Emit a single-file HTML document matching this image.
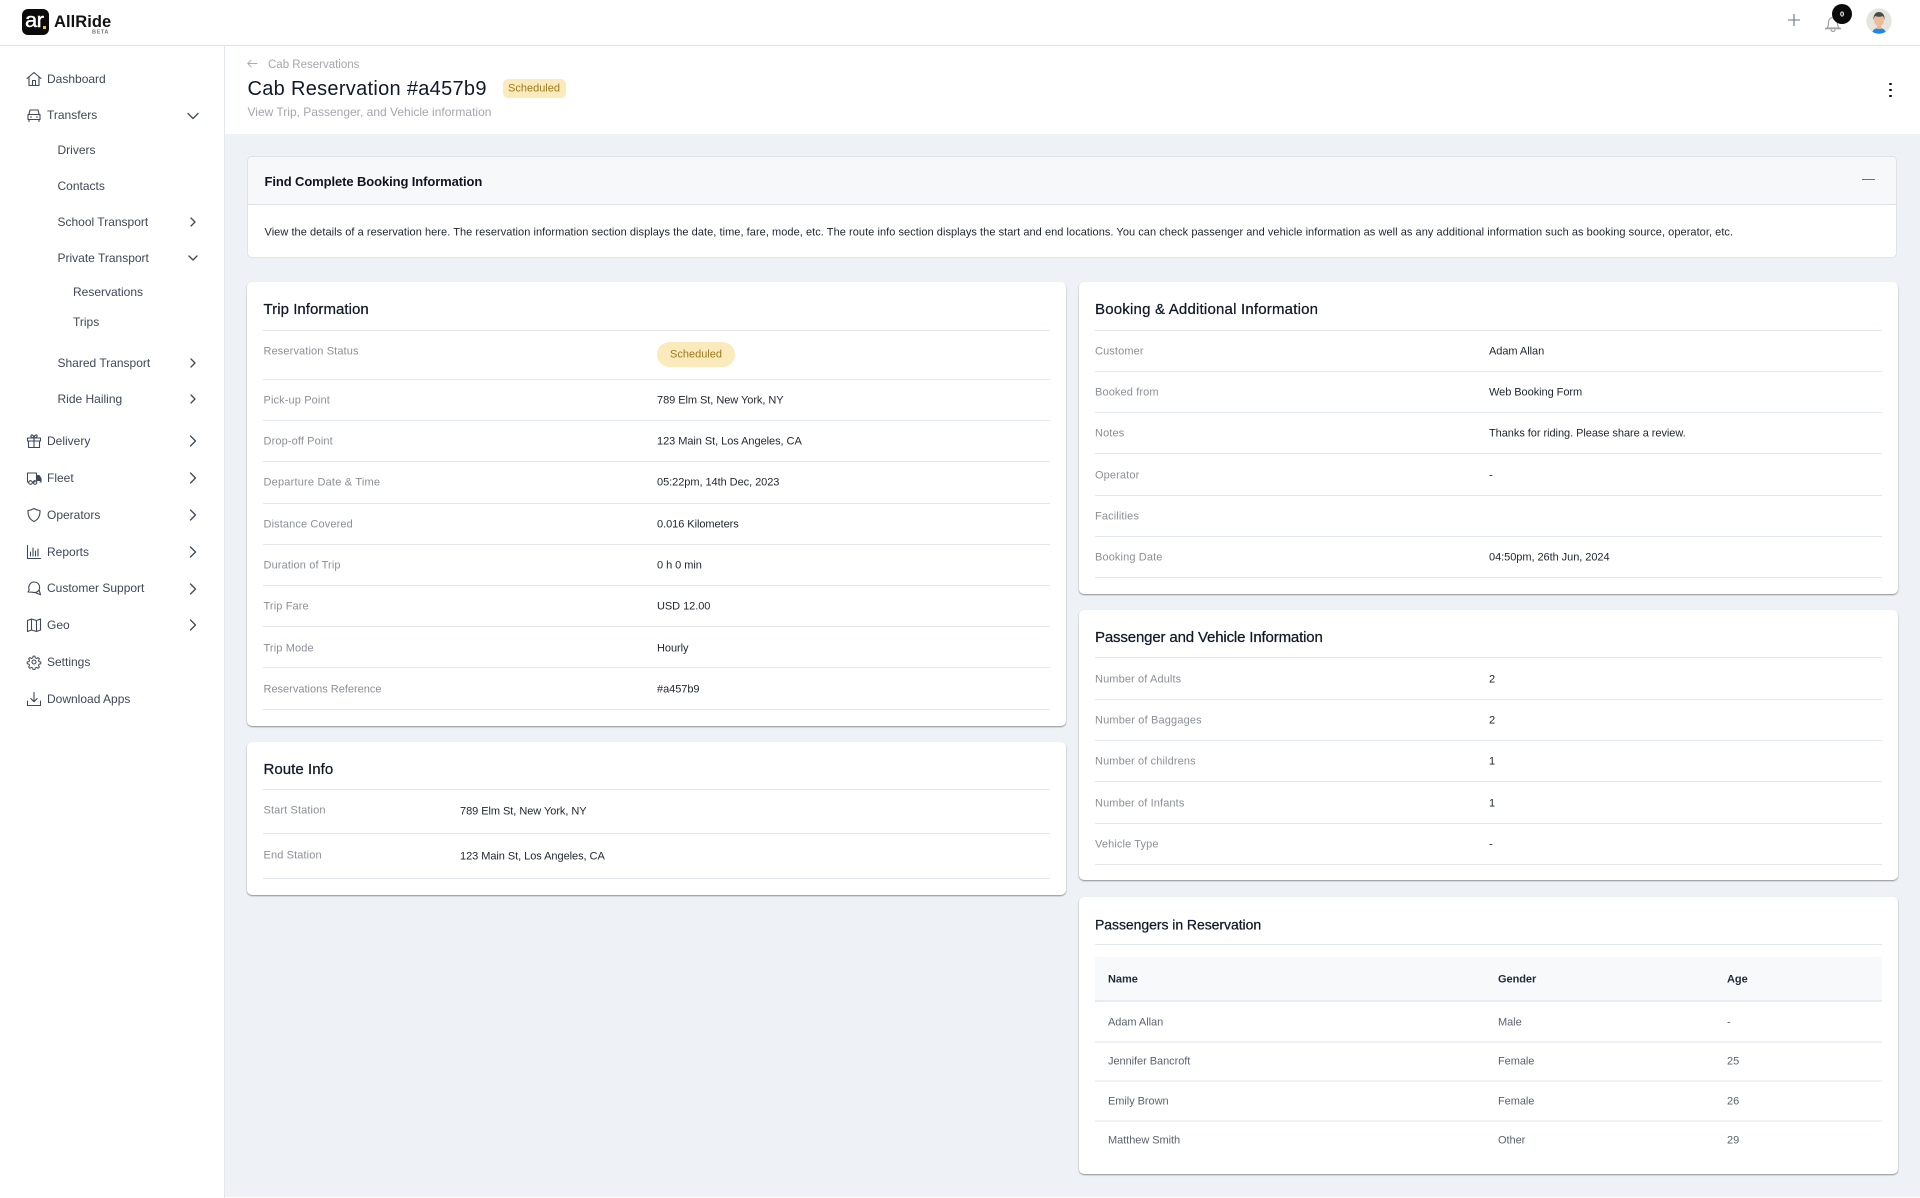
<!DOCTYPE html>
<html lang="en"><head><meta charset="utf-8"><title>Cab Reservation</title>
<style>
*{box-sizing:border-box}
html,body{margin:0;padding:0;width:1920px;height:1198px;overflow:hidden;background:#eef1f6;font-family:"Liberation Sans",sans-serif}
.a{position:absolute}
.t{position:absolute;transform:translateY(-50%);white-space:nowrap;line-height:1.2}
.s{font-size:12px;color:#3f4757;letter-spacing:0}
.i{position:absolute;left:26px;width:16px;height:16px;fill:none;stroke:#3f4757;stroke-width:1.1;stroke-linecap:round;stroke-linejoin:round}
.c{position:absolute;width:12px;height:12px;fill:none;stroke:#3f4757;stroke-width:1.3;stroke-linecap:round;stroke-linejoin:round}
.card{position:absolute;background:#fff;border-radius:5px;box-shadow:0 1px 1.5px rgba(60,60,60,.55)}
.h{font-size:15px;color:#111827;letter-spacing:.05px;-webkit-text-stroke:.25px #111827;margin-top:1px}
.l{font-size:11px;color:#8b8f97;letter-spacing:.12px;margin-top:1px}
.v{font-size:11px;color:#1f2430;letter-spacing:-.05px;margin-top:1px}
.d{position:absolute;height:1px;background:#e3e8ef}
.g{font-size:11px;color:#5b6270;letter-spacing:-.05px;margin-top:1px}
.b{font-size:11px;color:#1f2937;font-weight:bold;letter-spacing:-.05px;margin-top:1px}
</style></head><body>

<!-- top bar -->
<div class="a" style="left:0;top:0;width:1920px;height:46px;background:#fff;border-bottom:1px solid #dfe3e8"></div>
<div class="a" style="left:22px;top:9px;width:27px;height:26px;background:#0b0b0b;border-radius:6px"></div>
<span class="t" style="left:25px;top:21px;font-size:20px;color:#fff;letter-spacing:-.5px;-webkit-text-stroke:.4px #fff;transform:translateY(-50%) scaleX(1.1);transform-origin:left center">ar</span>
<div class="a" style="left:43px;top:26px;width:3px;height:3px;background:#f4c430"></div>
<span class="t" style="left:54px;top:23px;font-size:16.500px;font-weight:bold;color:#111;letter-spacing:.05px">AllRide</span>
<span class="t" style="left:92px;top:33px;font-size:5.500px;font-weight:bold;color:#777;letter-spacing:.6px">BETA</span>

<svg class="a" style="left:1787px;top:13px;width:14px;height:14px" viewBox="0 0 14 14" fill="none" stroke="#64748b" stroke-width="1.1"><path d="M7 1v12M1 7h12"/></svg>
<svg class="a" style="left:1823px;top:12px;width:20px;height:20px" viewBox="0 0 20 20" fill="none" stroke="#a3a3a3" stroke-width="1.2"><path d="M4 16c1.500-2 1.500-3 1.500-6a4.500 4.500 0 0 1 9 0c0 3 0 4 1.500 6z"/><path d="M2 16.500h16" stroke-width="1.600"/><path d="M8 17.500a2 2 0 0 0 4 0"/></svg>
<div class="a" style="left:1832px;top:4px;width:20px;height:20px;border-radius:50%;background:#0b0b0b"></div>
<span class="t" style="left:1840px;top:14px;font-size:7.500px;font-weight:bold;color:#fff">0</span>
<svg class="a" style="left:1866px;top:8px;width:26px;height:26px" viewBox="0 0 26 26"><defs><clipPath id="av"><circle cx="13" cy="13" r="12.700"/></clipPath></defs><circle cx="13" cy="13" r="12.700" fill="#e4e4e0"/><g clip-path="url(#av)"><path d="M6 26c0-4 3-6 7-6s7 2 7 6z" fill="#1e88e5"/><rect x="11" y="16" width="4" height="5" fill="#e8b48e"/><ellipse cx="13" cy="12" rx="5" ry="6.300" fill="#edbb96"/><path d="M7.500 12c-.5-5 2-8 5.500-8s6 3 5.500 8c-.5-2-1-3.500-2-4-2 1-5 1-7 0-1 .5-1.500 2-2 4z" fill="#4a4a4a"/></g></svg>

<!-- sidebar -->
<div class="a" style="left:0;top:46px;width:225px;height:1152px;background:#fff;border-right:1px solid #e4e8ee"></div>
<span class="t s" style="left:47px;top:79px">Dashboard</span>
<span class="t s" style="left:47px;top:115px">Transfers</span>
<span class="t s" style="left:57.500px;top:150px">Drivers</span>
<span class="t s" style="left:57.500px;top:186px">Contacts</span>
<span class="t s" style="left:57.500px;top:222px">School Transport</span>
<span class="t s" style="left:57.500px;top:258px">Private Transport</span>
<span class="t s" style="left:73px;top:292px">Reservations</span>
<span class="t s" style="left:73px;top:322px">Trips</span>
<span class="t s" style="left:57.500px;top:363px">Shared Transport</span>
<span class="t s" style="left:57.500px;top:399px">Ride Hailing</span>
<span class="t s" style="left:47px;top:441px">Delivery</span>
<span class="t s" style="left:47px;top:478px">Fleet</span>
<span class="t s" style="left:47px;top:515px">Operators</span>
<span class="t s" style="left:47px;top:552px">Reports</span>
<span class="t s" style="left:47px;top:588px">Customer Support</span>
<span class="t s" style="left:47px;top:625px">Geo</span>
<span class="t s" style="left:47px;top:662px">Settings</span>
<span class="t s" style="left:47px;top:699px">Download Apps</span>

<svg class="i" style="top:71px" viewBox="0 0 16 16"><path d="M1 7.500 8 1.500l7 6M3 6v8.500h10V6M6.500 14.500V9.500h3v5"/></svg>
<svg class="i" style="top:107px" viewBox="0 0 16 16"><path d="M3 7l1-4h8l1 4M2 7.500h12v5H2zM3 12.500v2M13 12.500v2M4.500 10h1M10.500 10h1"/></svg>
<svg class="i" style="top:433px" viewBox="0 0 16 16"><path d="M1.500 5h13v3h-13zM2.500 8v6.500h11V8M8 5v9.500M8 5C6 5 4.500 4 5 2.500S8 2.500 8 5c0-2.500 2.500-4 3-2.500S10 5 8 5z"/></svg>
<svg class="i" style="top:470px" viewBox="0 0 16 16"><path d="M2.500 12H1.500V3h9v7M10.500 5.500h2.500l2 3V12h-1M7 12h2"/><circle cx="4.500" cy="12.500" r="1.800"/><circle cx="9" cy="12.500" r="1.800"/><path d="M11 6h2.500l1 2.500v2h-3.500z" fill="#3f4757"/></svg>
<svg class="i" style="top:507px" viewBox="0 0 16 16"><path d="M8 1.500c2 1.300 4 1.800 6 2 .2 5-1.500 9-6 11-4.500-2-6.200-6-6-11 2-.2 4-.7 6-2z"/></svg>
<svg class="i" style="top:544px" viewBox="0 0 16 16"><path d="M1.500 1.500v13h13M4.500 12V8M7 12V4M9.500 12V7M12 12V5"/></svg>
<svg class="i" style="top:580px" viewBox="0 0 16 16"><path d="M2 12 3.200 10C1.800 6.500 4 2 8 2s6 3 5.500 6.500c-.5 3-4 4.800-7 3.700zM9 12.500l5.500 2.200-1.300-4.500"/></svg>
<svg class="i" style="top:617px" viewBox="0 0 16 16"><path d="M1.500 3.500 5.500 2l5 1.500 4-1.500v11l-4 1.500-5-1.500-4 1.500zM5.500 2v11M10.500 3.500v11"/></svg>
<svg class="i" style="top:654px" viewBox="0 0 16 16"><circle cx="8" cy="8" r="2"/><path d="M7 1.500h2l.4 1.900 1.500.7 1.700-1 1.400 1.400-1 1.700.6 1.400 2 .4v2l-2 .4-.6 1.500 1 1.700-1.400 1.400-1.700-1-1.500.6-.4 2H7l-.4-2-1.500-.6-1.700 1-1.400-1.400 1-1.700-.6-1.500-2-.4v-2l2-.4.6-1.400-1-1.700 1.400-1.400 1.700 1 1.500-.7z" transform="translate(.8 .8) scale(.9)"/></svg>
<svg class="i" style="top:691px" viewBox="0 0 16 16"><path d="M8 1.500v9M4.800 7.500 8 10.700l3.200-3.200M1.500 10v4.500h13V10"/></svg>

<svg class="c" style="left:185.500px;top:110px;width:14px;height:12px" viewBox="0 0 14 12"><path d="M2 3.500l5 5 5-5"/></svg>
<svg class="c" style="left:186.500px;top:216px" viewBox="0 0 12 12"><path d="M4 2l4 4-4 4"/></svg>
<svg class="c" style="left:186.500px;top:252px" viewBox="0 0 12 12"><path d="M2 4l4 4 4-4"/></svg>
<svg class="c" style="left:186.500px;top:357px" viewBox="0 0 12 12"><path d="M4 2l4 4-4 4"/></svg>
<svg class="c" style="left:186.500px;top:393px" viewBox="0 0 12 12"><path d="M4 2l4 4-4 4"/></svg>
<svg class="c" style="left:186.500px;top:434px;height:14px" viewBox="0 0 12 14"><path d="M3.500 2l5 5-5 5"/></svg>
<svg class="c" style="left:186.500px;top:471px;height:14px" viewBox="0 0 12 14"><path d="M3.500 2l5 5-5 5"/></svg>
<svg class="c" style="left:186.500px;top:508px;height:14px" viewBox="0 0 12 14"><path d="M3.500 2l5 5-5 5"/></svg>
<svg class="c" style="left:186.500px;top:545px;height:14px" viewBox="0 0 12 14"><path d="M3.500 2l5 5-5 5"/></svg>
<svg class="c" style="left:186.500px;top:582px;height:14px" viewBox="0 0 12 14"><path d="M3.500 2l5 5-5 5"/></svg>
<svg class="c" style="left:186.500px;top:618px;height:14px" viewBox="0 0 12 14"><path d="M3.500 2l5 5-5 5"/></svg>

<!-- page header -->
<div class="a" style="left:225px;top:46px;width:1695px;height:88px;background:#fff"></div>
<svg class="a" style="left:247px;top:58px;width:11px;height:11px" viewBox="0 0 11 11" fill="none" stroke="#a8adb5" stroke-width="1"><path d="M10.500 5.500H.8M4.500 1.800.8 5.500l3.700 3.700"/></svg>
<span class="t" style="left:268px;top:65.500px;font-size:11.500px;color:#a3a7ae">Cab Reservations</span>
<span class="t" style="left:247.500px;top:89px;font-size:20px;color:#111827;letter-spacing:.3px">Cab Reservation #a457b9</span>
<div class="a" style="left:503px;top:79px;width:63px;height:19px;background:#fbeabb;border-radius:5px"></div>
<span class="t" style="left:508px;top:89px;font-size:11px;color:#9a7a1e">Scheduled</span>
<span class="t" style="left:247.500px;top:112px;font-size:12px;color:#a3a7ae;letter-spacing:0">View Trip, Passenger, and Vehicle information</span>
<div class="a" style="left:1889px;top:82.500px;width:2.500px;height:2.500px;border-radius:50%;background:#111;box-shadow:0 6px 0 #111,0 12px 0 #111"></div>

<!-- info card -->
<div class="a" style="left:247px;top:156px;width:1650px;height:102px;background:#fff;border:1px solid #dfe3ea;border-radius:5px;overflow:hidden">
  <div class="a" style="left:0;top:0;width:100%;height:48px;background:#f7f8fa;border-bottom:1px solid #dfe3ea"></div>
</div>
<span class="t" style="left:264.500px;top:182px;font-size:13px;font-weight:bold;color:#0f1420;letter-spacing:-.1px">Find Complete Booking Information</span>
<div class="a" style="left:1862px;top:179px;width:13px;height:1px;background:#6b7280"></div>
<span class="t" style="left:264.500px;top:233px;font-size:11px;color:#1f2430;letter-spacing:.05px">View the details of a reservation here. The reservation information section displays the date, time, fare, mode, etc. The route info section displays the start and end locations. You can check passenger and vehicle information as well as any additional information such as booking source, operator, etc.</span>

<!-- Trip card -->
<div class="card" style="left:247px;top:282px;width:819px;height:444px"></div>
<span class="t h" style="left:263.500px;top:309px">Trip Information</span>
<div class="d" style="left:263px;top:330px;width:787px"></div>
<div class="d" style="left:263px;top:379px;width:787px"></div>
<div class="d" style="left:263px;top:420px;width:787px"></div>
<div class="d" style="left:263px;top:461px;width:787px"></div>
<div class="d" style="left:263px;top:503px;width:787px"></div>
<div class="d" style="left:263px;top:544px;width:787px"></div>
<div class="d" style="left:263px;top:585px;width:787px"></div>
<div class="d" style="left:263px;top:626px;width:787px"></div>
<div class="d" style="left:263px;top:667px;width:787px"></div>
<div class="d" style="left:263px;top:709px;width:787px"></div>
<span class="t l" style="left:263.500px;top:351px">Reservation Status</span>
<div class="a" style="left:657px;top:342px;width:78px;height:25px;background:#fbeabb;border-radius:13px"></div>
<span class="t" style="left:670px;top:355px;font-size:11px;color:#9a7a1e">Scheduled</span>
<span class="t l" style="left:263.500px;top:400px">Pick-up Point</span><span class="t v" style="left:657px;top:400px">789 Elm St, New York, NY</span>
<span class="t l" style="left:263.500px;top:441px">Drop-off Point</span><span class="t v" style="left:657px;top:441px">123 Main St, Los Angeles, CA</span>
<span class="t l" style="left:263.500px;top:482px;letter-spacing:.2px">Departure Date &amp; Time</span><span class="t v" style="left:657px;top:482px">05:22pm, 14th Dec, 2023</span>
<span class="t l" style="left:263.500px;top:524px">Distance Covered</span><span class="t v" style="left:657px;top:524px">0.016 Kilometers</span>
<span class="t l" style="left:263.500px;top:565px">Duration of Trip</span><span class="t v" style="left:657px;top:565px">0 h 0 min</span>
<span class="t l" style="left:263.500px;top:606px">Trip Fare</span><span class="t v" style="left:657px;top:606px">USD 12.00</span>
<span class="t l" style="left:263.500px;top:648px">Trip Mode</span><span class="t v" style="left:657px;top:648px">Hourly</span>
<span class="t l" style="left:263.500px;top:689px;letter-spacing:0">Reservations Reference</span><span class="t v" style="left:657px;top:689px">#a457b9</span>

<!-- Route card -->
<div class="card" style="left:247px;top:742px;width:819px;height:153px"></div>
<span class="t h" style="left:263.500px;top:769px">Route Info</span>
<div class="d" style="left:263px;top:789px;width:787px"></div>
<div class="d" style="left:263px;top:833px;width:787px"></div>
<div class="d" style="left:263px;top:878px;width:787px"></div>
<span class="t l" style="left:263.500px;top:810px">Start Station</span><span class="t v" style="left:460px;top:811px">789 Elm St, New York, NY</span>
<span class="t l" style="left:263.500px;top:855px">End Station</span><span class="t v" style="left:460px;top:856px">123 Main St, Los Angeles, CA</span>

<!-- Booking card -->
<div class="card" style="left:1079px;top:282px;width:819px;height:312px"></div>
<span class="t h" style="left:1095px;top:309px;letter-spacing:.2px">Booking &amp; Additional Information</span>
<div class="d" style="left:1095px;top:330px;width:787px"></div>
<div class="d" style="left:1095px;top:371px;width:787px"></div>
<div class="d" style="left:1095px;top:412px;width:787px"></div>
<div class="d" style="left:1095px;top:453px;width:787px"></div>
<div class="d" style="left:1095px;top:495px;width:787px"></div>
<div class="d" style="left:1095px;top:536px;width:787px"></div>
<div class="d" style="left:1095px;top:577px;width:787px"></div>
<span class="t l" style="left:1095px;top:351px">Customer</span><span class="t v" style="left:1489px;top:351px">Adam Allan</span>
<span class="t l" style="left:1095px;top:392px">Booked from</span><span class="t v" style="left:1489px;top:392px">Web Booking Form</span>
<span class="t l" style="left:1095px;top:433px">Notes</span><span class="t v" style="left:1489px;top:433px">Thanks for riding. Please share a review.</span>
<span class="t l" style="left:1095px;top:475px">Operator</span><span class="t v" style="left:1489px;top:475px">-</span>
<span class="t l" style="left:1095px;top:516px">Facilities</span>
<span class="t l" style="left:1095px;top:557px">Booking Date</span><span class="t v" style="left:1489px;top:557px">04:50pm, 26th Jun, 2024</span>

<!-- Passenger and vehicle card -->
<div class="card" style="left:1079px;top:610px;width:819px;height:270px"></div>
<span class="t h" style="left:1095px;top:637px;letter-spacing:-.15px">Passenger and Vehicle Information</span>
<div class="d" style="left:1095px;top:657px;width:787px"></div>
<div class="d" style="left:1095px;top:699px;width:787px"></div>
<div class="d" style="left:1095px;top:740px;width:787px"></div>
<div class="d" style="left:1095px;top:781px;width:787px"></div>
<div class="d" style="left:1095px;top:823px;width:787px"></div>
<div class="d" style="left:1095px;top:864px;width:787px"></div>
<span class="t l" style="left:1095px;top:679px">Number of Adults</span><span class="t v" style="left:1489px;top:679px">2</span>
<span class="t l" style="left:1095px;top:720px;letter-spacing:.16px">Number of Baggages</span><span class="t v" style="left:1489px;top:720px">2</span>
<span class="t l" style="left:1095px;top:761px">Number of childrens</span><span class="t v" style="left:1489px;top:761px">1</span>
<span class="t l" style="left:1095px;top:803px">Number of Infants</span><span class="t v" style="left:1489px;top:803px">1</span>
<span class="t l" style="left:1095px;top:844px">Vehicle Type</span><span class="t v" style="left:1489px;top:844px">-</span>

<!-- Passengers card -->
<div class="card" style="left:1079px;top:897px;width:819px;height:277px"></div>
<span class="t h" style="left:1095px;top:924px;font-size:14px;letter-spacing:-.05px">Passengers in Reservation</span>
<div class="d" style="left:1095px;top:944px;width:787px"></div>
<div class="a" style="left:1095px;top:957px;width:787px;height:45px;background:#f8f9fb;border-bottom:2px solid #e8ecf2"></div>
<span class="t b" style="left:1108px;top:979px">Name</span><span class="t b" style="left:1498px;top:979px">Gender</span><span class="t b" style="left:1727px;top:979px">Age</span>
<div class="d" style="left:1095px;top:1041px;width:787px;height:2px;background:#eef1f5"></div>
<div class="d" style="left:1095px;top:1080px;width:787px;height:2px;background:#eef1f5"></div>
<div class="d" style="left:1095px;top:1120px;width:787px;height:2px;background:#eef1f5"></div>
<span class="t g" style="left:1108px;top:1022px">Adam Allan</span><span class="t g" style="left:1498px;top:1022px">Male</span><span class="t g" style="left:1727px;top:1022px">-</span>
<span class="t g" style="left:1108px;top:1061px">Jennifer Bancroft</span><span class="t g" style="left:1498px;top:1061px">Female</span><span class="t g" style="left:1727px;top:1061px">25</span>
<span class="t g" style="left:1108px;top:1101px">Emily Brown</span><span class="t g" style="left:1498px;top:1101px">Female</span><span class="t g" style="left:1727px;top:1101px">26</span>
<span class="t g" style="left:1108px;top:1140px">Matthew Smith</span><span class="t g" style="left:1498px;top:1140px">Other</span><span class="t g" style="left:1727px;top:1140px">29</span>

<div class="a" style="left:225px;top:1197px;width:1695px;height:1px;background:#fff"></div>
</body></html>
